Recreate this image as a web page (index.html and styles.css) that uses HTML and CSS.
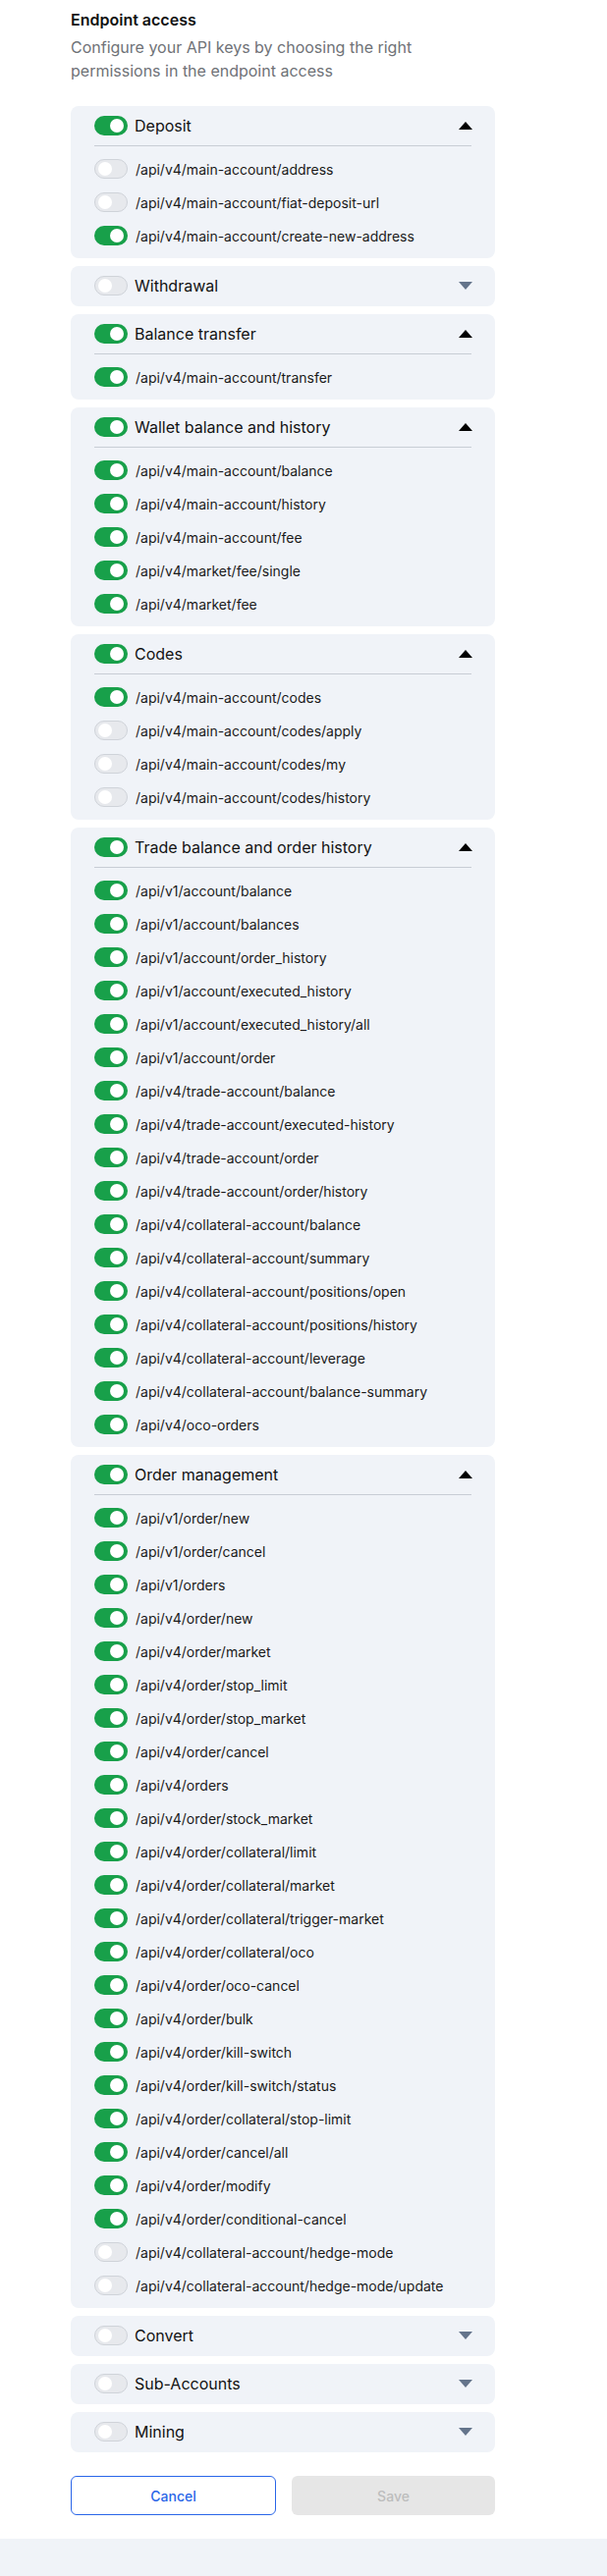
FILE: index.html
```html
<!DOCTYPE html>
<html lang="en">
<head>
<meta charset="utf-8">
<title>Endpoint access</title>
<link rel="stylesheet" href="styles.css">
</head>
<body>
<main class="main">
  <div class="content">
    <h2 class="title">Endpoint access</h2>
    <p class="subtitle">Configure your API keys by choosing the right permissions in the endpoint access</p>

    <div class="groups">
      <section class="group">
        <div class="group-head"><span class="toggle on"></span><span class="label">Deposit</span><svg class="arrow" width="14" height="8" viewBox="0 0 14 8"><path d="M7 0L14 8H0Z" fill="#000"/></svg></div>
        <div class="rows">
          <div class="row"><span class="toggle off"></span><span>/api/v4/main-account/address</span></div>
          <div class="row"><span class="toggle off"></span><span>/api/v4/main-account/fiat-deposit-url</span></div>
          <div class="row"><span class="toggle on"></span><span>/api/v4/main-account/create-new-address</span></div>
        </div>
      </section>

      <section class="group collapsed">
        <div class="group-head"><span class="toggle off"></span><span class="label">Withdrawal</span><svg class="arrow" width="14" height="8" viewBox="0 0 14 8"><path d="M0 0H14L7 8Z" fill="#64748b"/></svg></div>
      </section>

      <section class="group">
        <div class="group-head"><span class="toggle on"></span><span class="label">Balance transfer</span><svg class="arrow" width="14" height="8" viewBox="0 0 14 8"><path d="M7 0L14 8H0Z" fill="#000"/></svg></div>
        <div class="rows">
          <div class="row"><span class="toggle on"></span><span>/api/v4/main-account/transfer</span></div>
        </div>
      </section>

      <section class="group">
        <div class="group-head"><span class="toggle on"></span><span class="label">Wallet balance and history</span><svg class="arrow" width="14" height="8" viewBox="0 0 14 8"><path d="M7 0L14 8H0Z" fill="#000"/></svg></div>
        <div class="rows">
          <div class="row"><span class="toggle on"></span><span>/api/v4/main-account/balance</span></div>
          <div class="row"><span class="toggle on"></span><span>/api/v4/main-account/history</span></div>
          <div class="row"><span class="toggle on"></span><span>/api/v4/main-account/fee</span></div>
          <div class="row"><span class="toggle on"></span><span>/api/v4/market/fee/single</span></div>
          <div class="row"><span class="toggle on"></span><span>/api/v4/market/fee</span></div>
        </div>
      </section>

      <section class="group">
        <div class="group-head"><span class="toggle on"></span><span class="label">Codes</span><svg class="arrow" width="14" height="8" viewBox="0 0 14 8"><path d="M7 0L14 8H0Z" fill="#000"/></svg></div>
        <div class="rows">
          <div class="row"><span class="toggle on"></span><span>/api/v4/main-account/codes</span></div>
          <div class="row"><span class="toggle off"></span><span>/api/v4/main-account/codes/apply</span></div>
          <div class="row"><span class="toggle off"></span><span>/api/v4/main-account/codes/my</span></div>
          <div class="row"><span class="toggle off"></span><span>/api/v4/main-account/codes/history</span></div>
        </div>
      </section>

      <section class="group">
        <div class="group-head"><span class="toggle on"></span><span class="label">Trade balance and order history</span><svg class="arrow" width="14" height="8" viewBox="0 0 14 8"><path d="M7 0L14 8H0Z" fill="#000"/></svg></div>
        <div class="rows">
          <div class="row"><span class="toggle on"></span><span>/api/v1/account/balance</span></div>
          <div class="row"><span class="toggle on"></span><span>/api/v1/account/balances</span></div>
          <div class="row"><span class="toggle on"></span><span>/api/v1/account/order_history</span></div>
          <div class="row"><span class="toggle on"></span><span>/api/v1/account/executed_history</span></div>
          <div class="row"><span class="toggle on"></span><span>/api/v1/account/executed_history/all</span></div>
          <div class="row"><span class="toggle on"></span><span>/api/v1/account/order</span></div>
          <div class="row"><span class="toggle on"></span><span>/api/v4/trade-account/balance</span></div>
          <div class="row"><span class="toggle on"></span><span>/api/v4/trade-account/executed-history</span></div>
          <div class="row"><span class="toggle on"></span><span>/api/v4/trade-account/order</span></div>
          <div class="row"><span class="toggle on"></span><span>/api/v4/trade-account/order/history</span></div>
          <div class="row"><span class="toggle on"></span><span>/api/v4/collateral-account/balance</span></div>
          <div class="row"><span class="toggle on"></span><span>/api/v4/collateral-account/summary</span></div>
          <div class="row"><span class="toggle on"></span><span>/api/v4/collateral-account/positions/open</span></div>
          <div class="row"><span class="toggle on"></span><span>/api/v4/collateral-account/positions/history</span></div>
          <div class="row"><span class="toggle on"></span><span>/api/v4/collateral-account/leverage</span></div>
          <div class="row"><span class="toggle on"></span><span>/api/v4/collateral-account/balance-summary</span></div>
          <div class="row"><span class="toggle on"></span><span>/api/v4/oco-orders</span></div>
        </div>
      </section>

      <section class="group">
        <div class="group-head"><span class="toggle on"></span><span class="label">Order management</span><svg class="arrow" width="14" height="8" viewBox="0 0 14 8"><path d="M7 0L14 8H0Z" fill="#000"/></svg></div>
        <div class="rows">
          <div class="row"><span class="toggle on"></span><span>/api/v1/order/new</span></div>
          <div class="row"><span class="toggle on"></span><span>/api/v1/order/cancel</span></div>
          <div class="row"><span class="toggle on"></span><span>/api/v1/orders</span></div>
          <div class="row"><span class="toggle on"></span><span>/api/v4/order/new</span></div>
          <div class="row"><span class="toggle on"></span><span>/api/v4/order/market</span></div>
          <div class="row"><span class="toggle on"></span><span>/api/v4/order/stop_limit</span></div>
          <div class="row"><span class="toggle on"></span><span>/api/v4/order/stop_market</span></div>
          <div class="row"><span class="toggle on"></span><span>/api/v4/order/cancel</span></div>
          <div class="row"><span class="toggle on"></span><span>/api/v4/orders</span></div>
          <div class="row"><span class="toggle on"></span><span>/api/v4/order/stock_market</span></div>
          <div class="row"><span class="toggle on"></span><span>/api/v4/order/collateral/limit</span></div>
          <div class="row"><span class="toggle on"></span><span>/api/v4/order/collateral/market</span></div>
          <div class="row"><span class="toggle on"></span><span>/api/v4/order/collateral/trigger-market</span></div>
          <div class="row"><span class="toggle on"></span><span>/api/v4/order/collateral/oco</span></div>
          <div class="row"><span class="toggle on"></span><span>/api/v4/order/oco-cancel</span></div>
          <div class="row"><span class="toggle on"></span><span>/api/v4/order/bulk</span></div>
          <div class="row"><span class="toggle on"></span><span>/api/v4/order/kill-switch</span></div>
          <div class="row"><span class="toggle on"></span><span>/api/v4/order/kill-switch/status</span></div>
          <div class="row"><span class="toggle on"></span><span>/api/v4/order/collateral/stop-limit</span></div>
          <div class="row"><span class="toggle on"></span><span>/api/v4/order/cancel/all</span></div>
          <div class="row"><span class="toggle on"></span><span>/api/v4/order/modify</span></div>
          <div class="row"><span class="toggle on"></span><span>/api/v4/order/conditional-cancel</span></div>
          <div class="row"><span class="toggle off"></span><span>/api/v4/collateral-account/hedge-mode</span></div>
          <div class="row"><span class="toggle off"></span><span>/api/v4/collateral-account/hedge-mode/update</span></div>
        </div>
      </section>

      <section class="group collapsed">
        <div class="group-head"><span class="toggle off"></span><span class="label">Convert</span><svg class="arrow" width="14" height="8" viewBox="0 0 14 8"><path d="M0 0H14L7 8Z" fill="#64748b"/></svg></div>
      </section>

      <section class="group collapsed">
        <div class="group-head"><span class="toggle off"></span><span class="label">Sub-Accounts</span><svg class="arrow" width="14" height="8" viewBox="0 0 14 8"><path d="M0 0H14L7 8Z" fill="#64748b"/></svg></div>
      </section>

      <section class="group collapsed">
        <div class="group-head"><span class="toggle off"></span><span class="label">Mining</span><svg class="arrow" width="14" height="8" viewBox="0 0 14 8"><path d="M0 0H14L7 8Z" fill="#64748b"/></svg></div>
      </section>
    </div>

    <div class="actions">
      <button class="btn btn-cancel" type="button">Cancel</button>
      <button class="btn btn-save" type="button" disabled>Save</button>
    </div>
  </div>
</main>
</body>
</html>
```

FILE: styles.css
```css
html, body {
  margin: 0;
  padding: 0;
}

body {
  background: #f0f3f8;
  font-family: Inter, "Noto Sans", sans-serif;
  color: #121212;
}

.main {
  background: #ffffff;
  padding: 8px 0 24px 72px;
}

.content {
  width: 432px;
}

.title {
  margin: 0 0 4px;
  font-size: 16px;
  line-height: 24px;
  font-weight: 600;
  color: #111111;
}

.subtitle {
  margin: 0 0 24px;
  font-size: 16px;
  line-height: 24px;
  font-weight: 400;
  color: #6f7277;
}

.groups {
  display: flex;
  flex-direction: column;
  gap: 8px;
}

.group {
  background: #f0f3f8;
  border-radius: 8px;
  padding: 0 24px;
}

.group-head {
  height: 40px;
  display: flex;
  align-items: center;
  gap: 7px;
  border-bottom: 1px solid #c8cdd5;
}

.group.collapsed .group-head {
  border-bottom-color: transparent;
}

.label {
  flex: 1;
  font-size: 16px;
  color: #121212;
}

.arrow {
  flex: none;
  display: block;
  margin-right: -1px;
}

.rows {
  padding: 6px 0;
}

.row {
  height: 34px;
  display: flex;
  align-items: center;
  gap: 8px;
  font-size: 14px;
  color: #1a1a1a;
}

.toggle {
  position: relative;
  flex: none;
  width: 34px;
  height: 20px;
  border-radius: 10px;
  box-sizing: border-box;
}

.toggle.on {
  background: #18a04a;
}

.toggle.off {
  background: #e7e9ed;
  border: 1px solid #cfd3d9;
}

.toggle::after {
  content: "";
  position: absolute;
  width: 14px;
  height: 14px;
  border-radius: 50%;
  background: #ffffff;
}

.toggle.on::after {
  top: 3px;
  right: 4px;
}

.toggle.off::after {
  top: 2px;
  left: 3px;
}

.actions {
  display: flex;
  gap: 16px;
  margin-top: 24px;
}

.btn {
  flex: 1;
  height: 40px;
  border-radius: 6px;
  font-family: Inter, "Noto Sans", sans-serif;
  font-size: 14px;
  font-weight: 500;
  cursor: pointer;
}

.btn-cancel {
  background: #ffffff;
  border: 1px solid #2a66e8;
  color: #2a66e8;
}

.btn-save {
  background: #e6e6e6;
  border: none;
  color: #bdbdbd;
}
```
